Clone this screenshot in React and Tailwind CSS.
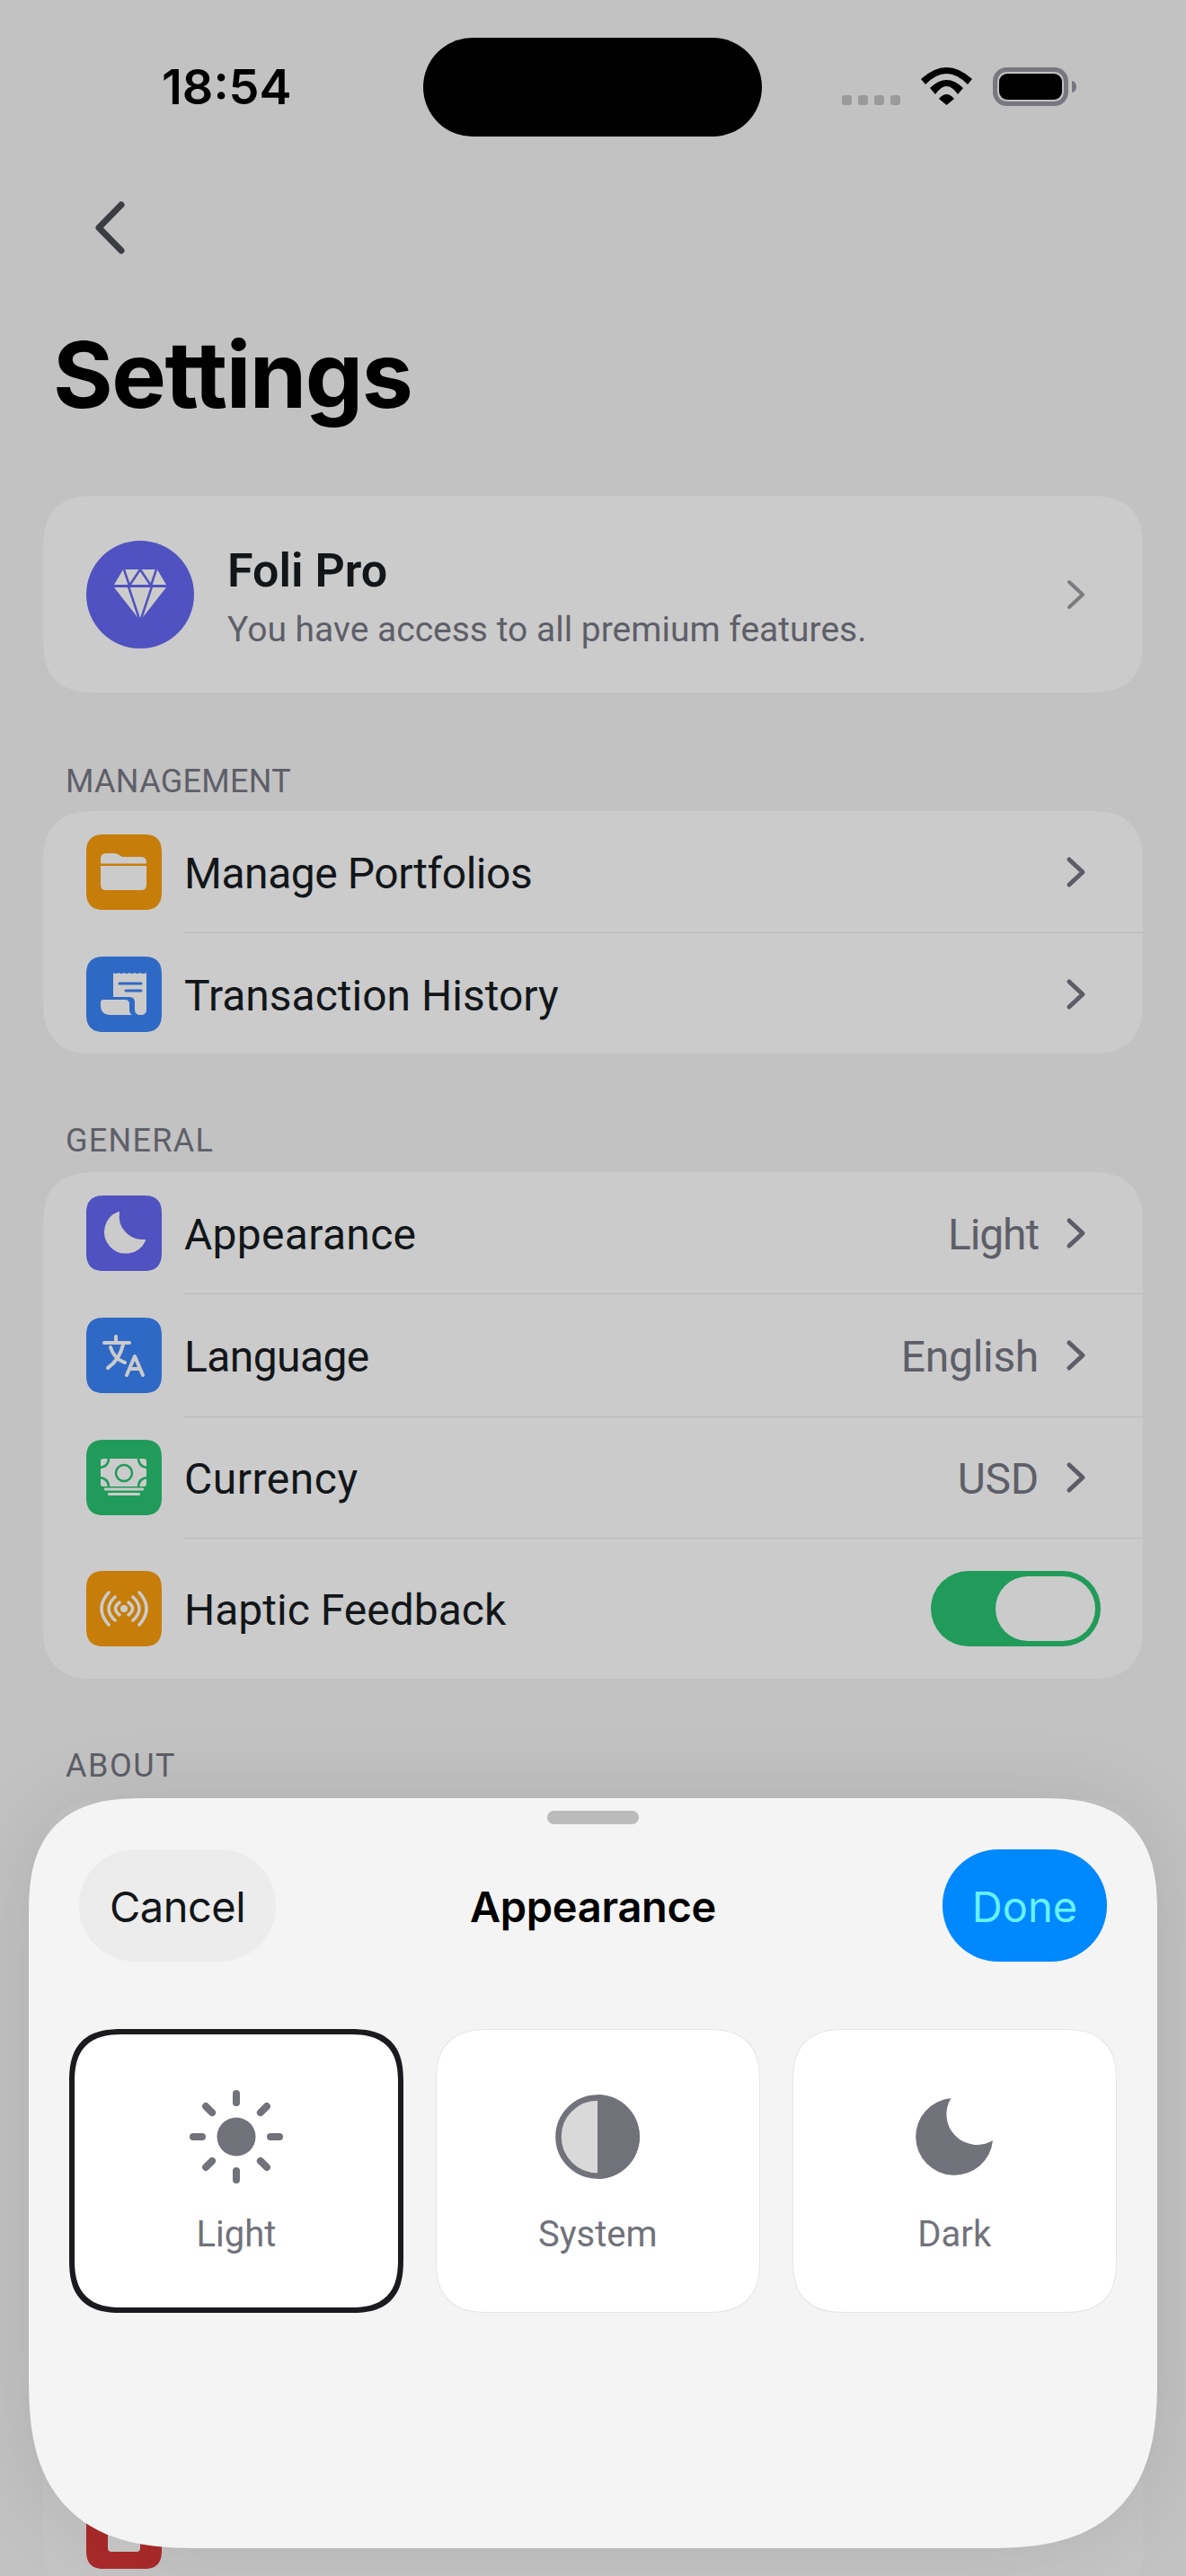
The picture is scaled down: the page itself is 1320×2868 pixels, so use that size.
import React from "react";

const plex = "font-['Roboto','Noto_Sans',sans-serif]";
const inter = "font-['Inter',sans-serif]";
const smooth = "[corner-shape:superellipse(1.4)]";

function Chevron({ color = "#5c5d66", w = 5 }) {
  return (
    <svg width="24" height="38" viewBox="0 0 24 38" fill="none" className="shrink-0">
      <path d="M5 5 L20 19 L5 33" stroke={color} strokeWidth={w} strokeLinecap="round" strokeLinejoin="round" />
    </svg>
  );
}

const L = "#cbcbcb";

function FolderIcon() {
  return (
    <svg width="84" height="84" viewBox="0 0 84 84">
      <path d="M16 27 q0-6 6-6 h9 q3 0 5 1.5 l4 2.5 h21 q6 0 6 6 v1.5 H16 z" fill={L} />
      <path d="M16 35 H67 V56 q0 6-6 6 H22 q-6 0-6-6 z" fill={L} />
    </svg>
  );
}
function ReceiptIcon() {
  return (
    <svg width="84" height="84" viewBox="0 0 84 84">
      <path d="M30 18 q3 2 6 0 q3 2 6 0 q3 2 6 0 q3 2 6 0 q3 2 6 0 q3 2 7 0 V59 q0 6-6.500 6 q-6.500 0-6.500-6 V51 q0-6-6-6 H30 z" fill={L} />
      <path d="M37 30 H61 M44 38 H61" stroke="#2f69c6" strokeWidth="3" strokeLinecap="round" />
      <path d="M16 51 q0-3 3-3 H43 q5 0 5 5 V59 q0 4 3 6 H27 q-11 0-11-11 z" fill={L} />
    </svg>
  );
}
function MoonSmall() {
  return (
    <svg width="84" height="84" viewBox="0 0 84 84">
      <path d="M36 19 A23 23 0 1 0 65 50 A 27 27 0 0 1 36 19 Z" fill={L} stroke={L} strokeWidth="2" strokeLinejoin="round" />
    </svg>
  );
}
function TranslateIcon() {
  return (
    <svg width="84" height="84" viewBox="0 0 84 84" fill="none" stroke={L} strokeWidth="4" strokeLinecap="round" strokeLinejoin="round">
      <path d="M20 28 H48 M33 21 V27 M27 33 Q31 46 43 50 M41 30 Q37 47 24 56" />
      <path d="M45 64 L54 43 L63 64 M49 57 H59" />
    </svg>
  );
}
function MoneyIcon() {
  return (
    <svg width="84" height="84" viewBox="0 0 84 84">
      <rect x="16" y="21" width="51" height="31" rx="3" fill={L} />
      <g fill="none" stroke="#209b5a" strokeWidth="2.500">
        <path d="M25 20 Q25 30 15 31 M58 20 Q58 30 68 31 M25 53 Q25 43 15 42 M58 53 Q58 43 68 42" />
        <circle cx="42" cy="37" r="9" />
      </g>
      <rect x="20" y="53.500" width="44" height="3" rx="1" fill={L} />
      <rect x="24" y="59" width="36" height="3" rx="1" fill={L} />
    </svg>
  );
}
function HapticIcon() {
  return (
    <svg width="84" height="84" viewBox="0 0 84 84" fill="none" stroke={L} strokeWidth="3.500" strokeLinecap="round">
      <path d="M25 24 Q9 42 25 60 M59 24 Q75 42 59 60" />
      <path d="M32 29 Q18 42 32 55 M52 29 Q66 42 52 55" />
      <path d="M37 35 Q28 42 37 49 M47 35 Q56 42 47 49" />
      <circle cx="42" cy="42" r="4" fill={L} stroke="none" />
    </svg>
  );
}

function Tile({ color, children }) {
  return (
    <div className={`w-[84px] h-[84px] shrink-0 rounded-[21px] ${smooth}`} style={{ backgroundColor: color }}>
      {children}
    </div>
  );
}

function Row({ color, icon, label, labelClass = "", value, valueClass = "", trailing, pad = "pt-[26px] pb-[25px]" }) {
  return (
    <div className={`flex items-center pl-[48px] ${pad}`}>
      <Tile color={color}>{icon}</Tile>
      <span className={`ml-[25px] mt-[3px] text-[48px] leading-[60px] text-[#121619] ${labelClass}`}>{label}</span>
      <div className="ml-auto flex items-center pr-[63px]">
        {value && <span className={`mt-[3px] text-[48px] leading-[60px] text-[#5e5f68] mr-[29px] ${valueClass}`}>{value}</span>}
        {trailing || <Chevron />}
      </div>
    </div>
  );
}

function Divider() {
  return <div className="h-px ml-[156px] bg-[#b9b9b9]" />;
}

function SectionLabel({ children, className = "" }) {
  return <div className={`pl-[25px] text-[36px] leading-[44px] text-[#5e5f68] ${className}`}>{children}</div>;
}

function Card({ children, className = "" }) {
  return <div className={`rounded-[60px] ${smooth} bg-[#cbcbcb] ${className}`}>{children}</div>;
}

function StatusBar() {
  return (
    <div className="flex items-center pt-[42px] pl-[180px]">
      <div className={`w-[291px] text-[54px] leading-[60px] font-semibold text-black ${inter}`}>18:54</div>
      <div className="w-[377px] h-[110px] rounded-full bg-black shrink-0" />
      <div className="ml-[89px] flex items-end gap-[7px] self-start mt-[64px]">
        {[0, 1, 2, 3].map((i) => (
          <span key={i} className="w-[11px] h-[11px] rounded-[3px] bg-[#9a9a9a]" />
        ))}
      </div>
      <svg width="57" height="42" viewBox="0 0 57 42" className="ml-[23px] self-start mt-[33px] shrink-0">
        <path d="M0 13 Q28.500 -13 57 13 L52 19 Q28.500 -5 5 19 Z M10 23 Q28.500 5 47 23 L41 30 Q28.500 12 16 30 Z M20 35 Q28.500 25 37 35 L28.500 42 Z" fill="#000" />
      </svg>
      <svg width="94" height="44" viewBox="0 0 94 44" className="ml-[23px] self-start mt-[32.500px] shrink-0">
        <rect x="2.500" y="2.500" width="79" height="38" rx="13" fill="none" stroke="#77777f" strokeWidth="5" />
        <rect x="7" y="7" width="70" height="29" rx="9" fill="#000" />
        <path d="M88 15 q5 1 5 6.500 q0 5.500 -5 6.500 z" fill="#77777f" />
      </svg>
    </div>
  );
}

function Sun() {
  const rays = [0, 45, 90, 135, 180, 225, 270, 315];
  return (
    <svg width="120" height="120" viewBox="0 0 120 120">
      <circle cx="60" cy="60" r="21.500" fill="#71727a" />
      {rays.map((a) => (
        <line key={a} x1="60" y1="12" x2="60" y2="22" stroke="#71727a" strokeWidth="8" strokeLinecap="round" transform={`rotate(${a} 60 60)`} />
      ))}
    </svg>
  );
}
function Half() {
  return (
    <svg width="120" height="120" viewBox="0 0 120 120">
      <path d="M60 16.500 A43.500 43.500 0 0 0 60 103.500 Z" fill="#d9d9d9" />
      <path d="M60 13 A47 47 0 0 1 60 107 Z" fill="#71727a" />
      <circle cx="60" cy="60" r="43.500" fill="none" stroke="#71727a" strokeWidth="6.500" />
    </svg>
  );
}
function Moon() {
  return (
    <svg width="120" height="120" viewBox="0 0 120 120">
      <path d="M56.500 17 A43 43 0 1 0 103 64 A 34 34 0 0 1 56.500 17 Z" fill="#71727a" />
    </svg>
  );
}

function Option({ icon, label, selected }) {
  return (
    <div
      className={
        selected
          ? `w-[372px] h-[316px] shrink-0 flex flex-col items-center bg-white rounded-[60px] ${smooth} border-[6px] border-[#1b1b1f] pt-[54px]`
          : `flex-1 h-[316px] flex flex-col items-center bg-white rounded-[60px] ${smooth} border border-[#e6e6e6] pt-[59px]`
      }
    >
      {icon}
      <span className="mt-[21px] text-[40px] leading-[56px] text-[#71727a]">{label}</span>
    </div>
  );
}

function Sheet() {
  return (
    <div className={`absolute left-[32px] top-[2002px] w-[1256px] h-[835px] bg-[#f4f4f4] rounded-t-[130px] rounded-b-[190px] ${smooth} shadow-[0_0_90px_rgba(0,0,0,0.1)] flex flex-col`}>
      <div className="mt-[14px] mx-auto w-[102px] h-[15px] rounded-full bg-[#bbbbbb]" />
      <div className="mt-[28px] px-[56px] grid grid-cols-[1fr_auto_1fr] items-center">
        <div className={`justify-self-start w-[219px] h-[125px] pt-[3px] rounded-[62px] bg-[#ececec] flex items-center justify-center text-[47px] tracking-[-0.5px] text-[#121619] ${inter}`}>Cancel</div>
        <div className={`pt-[3px] text-[47px] tracking-[-0.3px] font-semibold text-black ${inter}`}>Appearance</div>
        <div className={`justify-self-end w-[183px] h-[125px] pt-[3px] rounded-[62px] bg-[#0088ff] flex items-center justify-center text-[47px] text-[#66f2ff] ${inter}`}>Done</div>
      </div>
      <div className="mt-[75px] px-[45px] flex gap-[35.500px]">
        <Option selected icon={<Sun />} label="Light" />
        <Option icon={<Half />} label="System" />
        <Option icon={<Moon />} label="Dark" />
      </div>
    </div>
  );
}

export default function App() {
  return (
    <div className={`relative w-[1320px] h-[2868px] overflow-hidden bg-[#c2c2c2] ${plex}`}>
      <StatusBar />

      <div className="ml-[105px] mt-[72px] h-[57px]">
        <svg width="34" height="59" viewBox="0 0 34 59" fill="none">
          <path d="M30 4 L5 29.500 L30 55" stroke="#3c3c43" strokeWidth="7" strokeLinecap="round" strokeLinejoin="round" />
        </svg>
      </div>

      <h1 className={`ml-[59px] mt-[76px] h-[120px] text-[102px] leading-[120px] font-bold text-black tracking-[-1.5px] ${inter}`}>Settings</h1>

      <div className="mx-[48px] mt-[75px]">
        <Card className="h-[219px] flex items-center pl-[48px] pr-[63px]">
          <div className="w-[120px] h-[120px] rounded-full bg-[#4f52c0] shrink-0">
            <svg width="120" height="120" viewBox="0 0 120 120">
              <path d="M41 32 H79 L89 49 H31 Z" fill={L} />
              <path d="M31 52 H89 L60 89 Z" fill={L} />
              <path d="M42 32 L48 50 L60 32 L72 50 L78 32 M47 51 L60 90 L73 51" fill="none" stroke="#4f52c0" strokeWidth="2.500" />
            </svg>
          </div>
          <div className="ml-[37px] pt-[9px] flex flex-col">
            <span className="text-[52px] leading-[60px] font-semibold text-[#121619]">Foli Pro</span>
            <span className="mt-[10px] text-[39px] leading-[50px] text-[#5e5f68]">You have access to all premium features.</span>
          </div>
          <div className="ml-auto">
            <Chevron color="#7b7c80" w={4} />
          </div>
        </Card>

        <SectionLabel className="mt-[77px] tracking-[0.3px]">MANAGEMENT</SectionLabel>
        <Card className="mt-[11px] overflow-hidden">
          <Row color="#c67d0a" icon={<FolderIcon />} label="Manage Portfolios" labelClass="tracking-[-0.45px]" />
          <Divider />
          <Row color="#2f69c6" icon={<ReceiptIcon />} label="Transaction History" labelClass="tracking-[0px]" pad="pt-[26px] pb-[24px]" />
        </Card>

        <SectionLabel className="mt-[75px] tracking-[1.3px]">GENERAL</SectionLabel>
        <Card className="mt-[13px] overflow-hidden">
          <Row color="#4f52c0" icon={<MoonSmall />} label="Appearance" labelClass="tracking-[0.3px]" value="Light" valueClass="tracking-[-1.1px]" />
          <Divider />
          <Row color="#2f69c6" icon={<TranslateIcon />} label="Language" labelClass="tracking-[-0.6px]" value="English" valueClass="tracking-[-0.3px]" pad="py-[26px]" />
          <Divider />
          <Row color="#209b5a" icon={<MoneyIcon />} label="Currency" labelClass="tracking-[0.5px]" value="USD" valueClass="tracking-[-0.3px]" pad="py-[25px]" />
          <Divider />
          <Row
            color="#c67d0a"
            icon={<HapticIcon />}
            label="Haptic Feedback"
            labelClass="tracking-[0px]"
            pad="py-[36px]"
            trailing={
              <div className="w-[189px] h-[84px] -mr-[16px] rounded-full bg-[#209b5a] flex items-center justify-end pr-[6px]">
                <div className="w-[111px] h-[72px] rounded-full bg-[#cbcbcb]" />
              </div>
            }
          />
        </Card>

        <SectionLabel className="mt-[75px] tracking-[1.5px]">ABOUT</SectionLabel>
        <div className="mt-[15px] h-[900px] rounded-[60px] bg-[#c5c5c5] pl-[48px] pt-[773px]">
          <Tile color="#ab2a2a">
            <svg width="84" height="84" viewBox="0 0 84 84">
              <rect x="24" y="8" width="36" height="57" rx="4" fill={L} />
            </svg>
          </Tile>
        </div>
      </div>

      <Sheet />
    </div>
  );
}
